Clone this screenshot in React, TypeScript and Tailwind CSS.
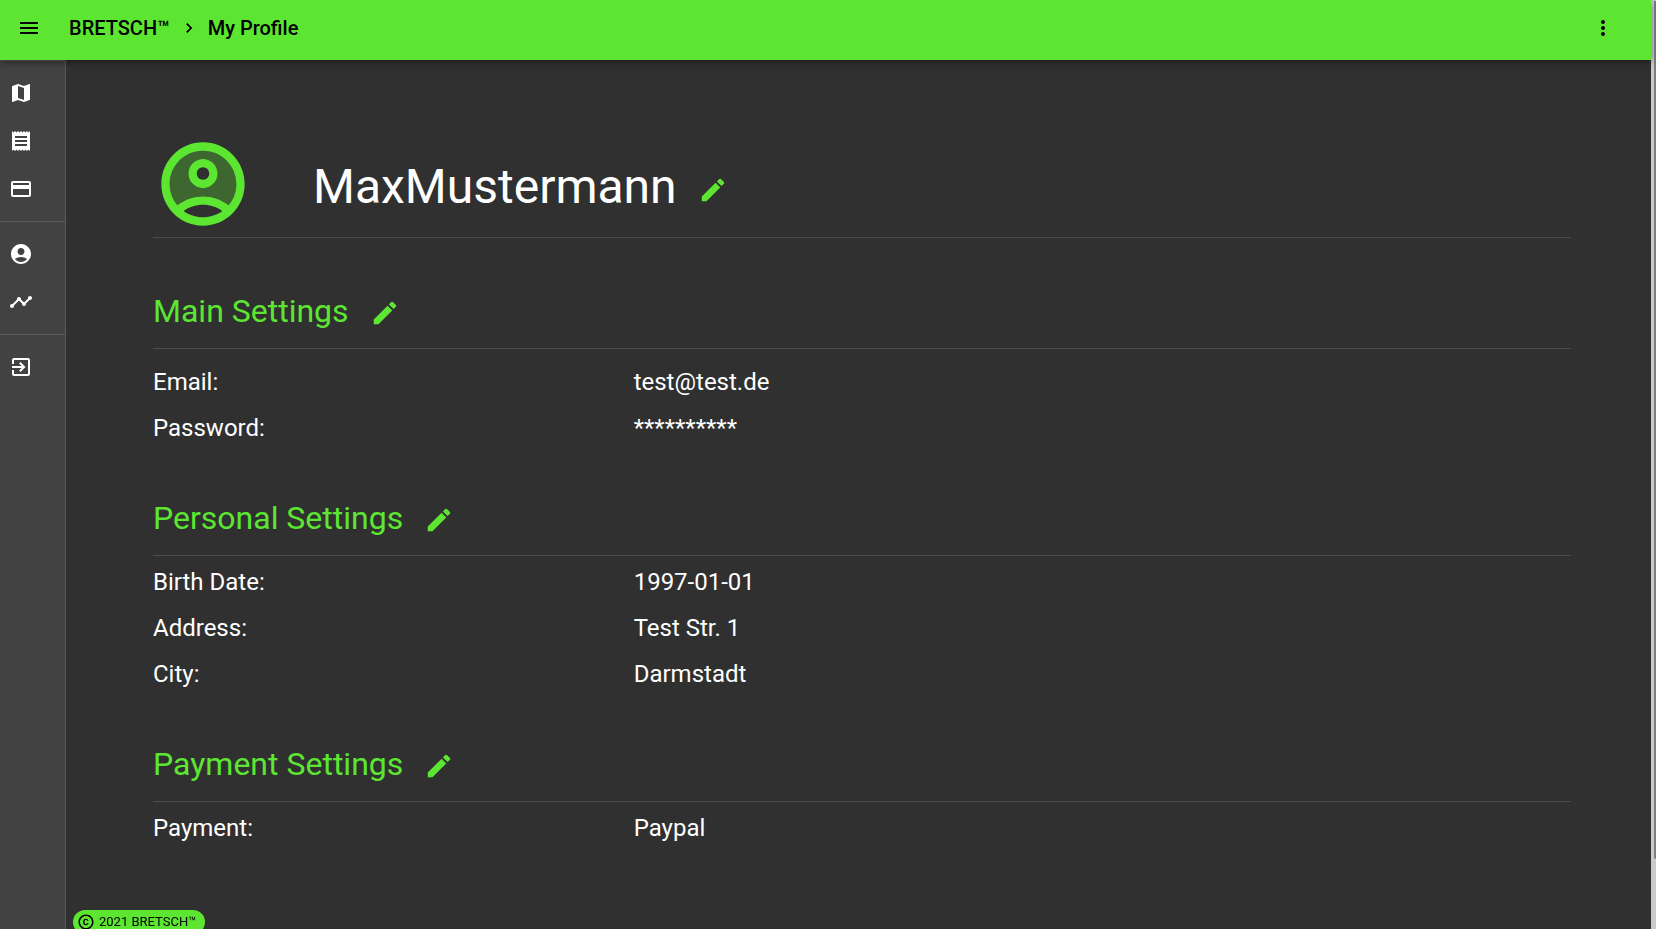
import type { ReactNode } from "react";
import type { IconType } from "react-icons";
import {
  MdAccountCircle,
  MdCopyright,
  MdEdit,
  MdExitToApp,
  MdMap,
  MdMenu,
  MdMoreVert,
  MdNavigateNext,
  MdPayment,
  MdReceipt,
  MdTimeline,
} from "react-icons/md";

type NavItem = { label: string; icon: IconType };

const navGroups: NavItem[][] = [
  [
    { label: "Map", icon: MdMap },
    { label: "Bookings", icon: MdReceipt },
    { label: "Payment", icon: MdPayment },
  ],
  [
    { label: "Profile", icon: MdAccountCircle },
    { label: "Statistics", icon: MdTimeline },
  ],
  [{ label: "Sign out", icon: MdExitToApp }],
];

function Avatar() {
  return (
    <svg viewBox="0 0 24 24" fill="currentColor" aria-hidden="true" className="size-[100px] text-[#5ce632]">
      <path
        opacity=".3"
        d="M12 4c-4.42 0-8 3.58-8 8 0 1.95.7 3.73 1.86 5.12C7.55 15.8 9.68 15 12 15s4.45.8 6.14 2.12C19.3 15.73 20 13.95 20 12c0-4.42-3.58-8-8-8zm0 9c-1.93 0-3.5-1.57-3.5-3.5S10.07 6 12 6s3.5 1.57 3.5 3.5S13.93 13 12 13z"
      />
      <path d="M12 2C6.48 2 2 6.48 2 12s4.48 10 10 10 10-4.48 10-10S17.52 2 12 2zM7.35 18.5C8.66 17.56 10.26 17 12 17s3.34.56 4.65 1.5C15.34 19.44 13.74 20 12 20s-3.34-.56-4.65-1.5zm10.79-1.38C16.45 15.8 14.32 15 12 15s-4.45.8-6.14 2.12C4.7 15.73 4 13.95 4 12c0-4.42 3.58-8 8-8s8 3.58 8 8c0 1.95-.7 3.73-1.86 5.12z" />
      <path d="M12 6c-1.93 0-3.5 1.57-3.5 3.5S10.07 13 12 13s3.5-1.57 3.5-3.5S13.93 6 12 6zm0 5c-.83 0-1.5-.67-1.5-1.5S11.17 8 12 8s1.5.67 1.5 1.5S12.83 11 12 11z" />
    </svg>
  );
}

function EditButton({ label }: { label: string }) {
  return (
    <button type="button" aria-label={label} className="block text-[#5ce632]">
      <MdEdit className="size-[30px]" />
    </button>
  );
}

type SectionProps = {
  title: string;
  rows: [string, ReactNode][];
  className: string;
  listClassName?: string;
};

function Section({ title, rows, className, listClassName = "pt-[3px]" }: SectionProps) {
  return (
    <section className={className}>
      <div className="flex items-center gap-[21px] border-b border-[#4a4a4a] pb-4">
        <h2 className="text-[32px] leading-[42px] text-[#5ce632]">{title}</h2>
        <div className="pt-1">
          <EditButton label={`Edit ${title}`} />
        </div>
      </div>
      <dl className={listClassName}>
        {rows.map(([label, value]) => (
          <div key={label} className="grid grid-cols-[1fr_2fr] gap-3 text-2xl leading-[46px]">
            <dt>{label}</dt>
            <dd>{value}</dd>
          </div>
        ))}
      </dl>
    </section>
  );
}

export default function App() {
  return (
    <div className="flex h-screen overflow-hidden bg-[#303030] font-['Roboto',sans-serif] text-white">
      <div className="flex min-w-0 flex-1 flex-col">
        <header className="relative z-10 flex h-[60px] shrink-0 items-center bg-[#5ce632] pb-1 pl-[17px] pr-9 text-black shadow-[0_2px_8px_rgba(0,0,0,0.45)]">
          <button type="button" aria-label="Open menu">
            <MdMenu className="size-6" />
          </button>
          <nav aria-label="Breadcrumb" className="ml-7 flex flex-1 items-center text-xl font-medium">
            <a href="#home">BRETSCH™</a>
            <MdNavigateNext className="mx-[9px] size-5" />
            <a href="#profile">My Profile</a>
          </nav>
          <button type="button" aria-label="More options">
            <MdMoreVert className="size-6" />
          </button>
        </header>

        <div className="flex min-h-0 flex-1">
          <nav aria-label="Main" className="w-[66px] shrink-0 border-r border-t border-[#5a5a5a] bg-[#424242]">
            {navGroups.map((group, index) => (
              <ul key={index} className="border-b border-[#5a5a5a] py-2 last:border-b-0">
                {group.map(({ label, icon: Icon }) => (
                  <li key={label}>
                    <a href={`#${label}`} aria-label={label} className="flex h-12 items-center pl-[9px]">
                      <Icon className="size-6" />
                    </a>
                  </li>
                ))}
              </ul>
            ))}
          </nav>

          <main className="min-w-0 flex-1 pl-[87px] pr-20 pt-[74px]">
            <div className="flex items-center gap-[60px] border-b border-[#4a4a4a] pb-[3px]">
              <Avatar />
              <div className="flex items-center gap-[21px] pt-1.5">
                <h1 className="text-5xl leading-[56px]">MaxMustermann</h1>
                <div className="pt-1.5">
                  <EditButton label="Edit user name" />
                </div>
              </div>
            </div>
            <Section
              title="Main Settings"
              className="pt-[52px]"
              listClassName="pt-[10px]"
              rows={[
                ["Email:", "test@test.de"],
                ["Password:", "**********"],
              ]}
            />
            <Section
              title="Personal Settings"
              className="pt-[46px]"
              rows={[
                ["Birth Date:", "1997-01-01"],
                ["Address:", "Test Str. 1"],
                ["City:", "Darmstadt"],
              ]}
            />
            <Section title="Payment Settings" className="pt-[46px]" rows={[["Payment:", "Paypal"]]} />
          </main>
        </div>
      </div>

      <div aria-hidden="true" className="flex w-[5px] shrink-0 justify-end bg-[#cacaca]">
        <div className="mt-px h-[92.4%] w-0.5 rounded-bl-sm bg-[#7b7f7d]" />
      </div>

      <footer className="fixed -bottom-[5px] left-[73px] z-10 flex h-6 items-center gap-1 rounded-full bg-[#5ce632] pl-1 pr-[9px] text-[13px] text-black">
        <MdCopyright className="size-[18px]" />
        <span>2021 BRETSCH™</span>
      </footer>
    </div>
  );
}
